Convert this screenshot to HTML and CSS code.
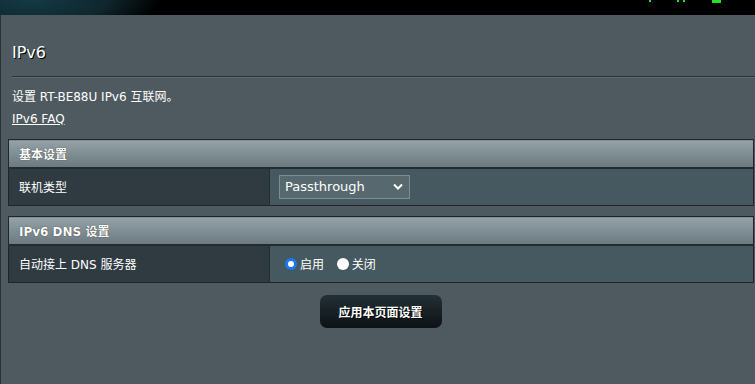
FILE: index.html
```html
<!DOCTYPE html>
<html lang="zh-CN">
<head>
    <meta charset="UTF-8">
    <title>IPv6</title>
    <link rel="stylesheet" href="styles.css">
</head>
<body>
    <!-- Barra superior -->
    <div class="topo">
        <div class="leds">
            <span class="led pequeno"></span>
            <span class="led pequeno l2"></span>
            <span class="led pequeno l3"></span>
            <span class="led grande"></span>
        </div>
    </div>

    <div class="painel">
        <h2 class="titulo">IPv6</h2>
        <div class="linha"></div>
        <p class="descricao">设置 RT-BE88U IPv6 互联网。</p>
        <a class="faq" href="#">IPv6 FAQ</a>

        <!-- Configuração básica -->
        <table class="tabela">
            <tr><th colspan="2">基本设置</th></tr>
            <tr>
                <td class="rotulo">联机类型</td>
                <td class="valor">
                    <div class="seletor">
                        <span>Passthrough</span>
                        <svg width="10" height="7" viewBox="0 0 10 7"><path d="M1 1.5 L5 5.5 L9 1.5" fill="none" stroke="#fff" stroke-width="2"/></svg>
                    </div>
                </td>
            </tr>
        </table>

        <!-- DNS -->
        <table class="tabela">
            <tr><th colspan="2">IPv6 DNS 设置</th></tr>
            <tr>
                <td class="rotulo">自动接上 DNS 服务器</td>
                <td class="valor">
                    <label class="opcao"><span class="radio marcado"></span>启用</label>
                    <label class="opcao"><span class="radio"></span>关闭</label>
                </td>
            </tr>
        </table>

        <div class="acoes">
            <button class="botao">应用本页面设置</button>
        </div>
    </div>
</body>
</html>
```

FILE: styles.css
```css
* {
    margin: 0;
    padding: 0;
    box-sizing: border-box;
}

body {
    font-family: 'DejaVu Sans', 'Noto Sans CJK SC', sans-serif;
    font-size: 12px;
    color: #fff;
    background: #4e5a60;
    width: 755px;
    height: 384px;
    overflow: hidden;
}

.topo {
    height: 15px;
    background: radial-gradient(ellipse 130px 40px at 30px 0, #143a44 0%, #0f262d 60%, #000 100%) no-repeat, #000;
    display: flex;
    justify-content: flex-end;
}

.leds {
    display: flex;
    align-items: flex-start;
    padding-right: 34px;
}

.led {
    background: #22e22a;
    display: block;
}

.led.pequeno {
    width: 2px;
    height: 2px;
    margin-right: 26px;
}

.led.l2 {
    margin-right: 4px;
}

.led.l3 {
    margin-right: 27px;
}

.led.grande {
    width: 9px;
    height: 3px;
}

.painel {
    height: 369px;
    border-left: 1px solid #2a3236;
    padding: 28px 0 0 11px;
}

.titulo {
    font-size: 16px;
    font-weight: normal;
    line-height: 20px;
    text-shadow: 1px 1px 0 #000;
    margin-bottom: 13px;
}

.linha {
    height: 2px;
    border-top: 1px solid #2c3438;
    border-bottom: 1px solid #5e6a70;
    margin-bottom: 11px;
}

.descricao {
    line-height: 16px;
    margin-bottom: 6px;
}

.faq {
    color: #fff;
    display: inline-block;
    line-height: 16px;
}

.tabela {
    width: 746px;
    margin-left: -4px;
    border-collapse: collapse;
    border: 1px solid #1f2629;
    margin-top: 12px;
}

.tabela + .tabela {
    margin-top: 10px;
}

.tabela th {
    height: 28px;
    text-align: left;
    font-weight: bold;
    padding-left: 10px;
    background: linear-gradient(#94a2a7, #6b7a80);
    border-bottom: 2px solid #232b2f;
    text-shadow: 0 0 1px #222;
}

.tabela td {
    height: 38px;
}

.rotulo {
    width: 261px;
    background: #2f3b41;
    padding-left: 10px;
    border-right: 1px solid #232b2f;
}

.valor {
    background: #475960;
    padding-left: 10px;
}

.seletor {
    width: 131px;
    height: 24px;
    margin-left: -1px;
    background: #57696f;
    border: 1px solid #7c8d93;
    display: flex;
    align-items: center;
    justify-content: space-between;
    padding: 0 6px 0 5px;
    font-size: 13px;
}

.opcao {
    display: inline-flex;
    align-items: center;
    margin-right: 9px;
}

.opcao:first-child {
    margin-left: 5px;
}

.radio {
    width: 12px;
    height: 12px;
    border-radius: 50%;
    background: #fff;
    display: inline-block;
    margin-right: 3px;
}

.radio.marcado {
    border: 3px solid #1a78f0;
}

.acoes {
    display: flex;
    justify-content: center;
    padding-top: 12px;
    padding-right: 6px;
}

.botao {
    width: 122px;
    height: 33px;
    border: none;
    border-radius: 7px;
    background: linear-gradient(#223036, #0d1214);
    color: #fff;
    font-family: 'DejaVu Sans', 'Noto Sans CJK SC', sans-serif;
    font-size: 12px;
    font-weight: bold;
    text-shadow: 1px 1px 0 #000;
    cursor: pointer;
}
```
